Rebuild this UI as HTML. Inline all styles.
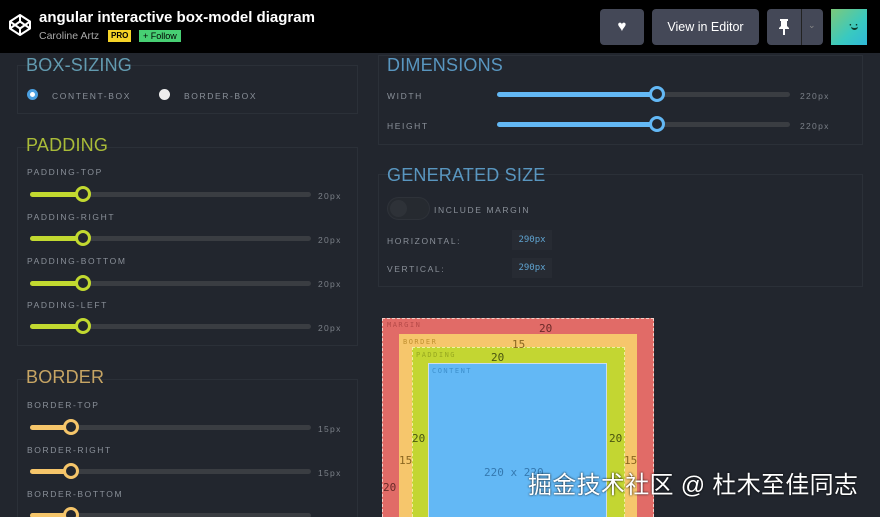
<!DOCTYPE html>
<html style="width:880px;height:517px;overflow:hidden"><head><meta charset="utf-8"><style>
*{margin:0;padding:0;box-sizing:border-box}
body{width:880px;height:517px;overflow:hidden;background:#22262e;font-family:"Liberation Sans",sans-serif}
#w{position:relative;width:880px;height:517px;overflow:hidden}
.a{position:absolute}
.hdr{left:0;top:0;width:880px;height:53px;background:#000}
.panel{position:absolute;border:1px solid #2b3038}
.h{position:absolute;font-size:18px;font-weight:normal;letter-spacing:0.2px;opacity:.9}
.lbl{position:absolute;font-size:8.5px;letter-spacing:1.6px;color:#8a9099}
.trk{position:absolute;height:5px;border-radius:3px;background:#3a3d42}
.fill{position:absolute;left:0;top:0;height:5px;border-radius:3px}
.th{position:absolute;width:16px;height:16px;border-radius:50%;border:3px solid;background:#22262e;top:-6px}
.val{position:absolute;font-size:8.5px;letter-spacing:1.3px;color:#7b8088}
.mono{font-family:"DejaVu Sans Mono","Liberation Mono",monospace}
</style></head><body><div id="w">
<div class="a hdr"></div>
<svg class="a" style="left:8px;top:13px" width="24" height="24" viewBox="0 0 24 24" fill="none" stroke="#fff" stroke-width="2" stroke-linejoin="round"><path d="M12 2L22 8.5V15.5L12 22L2 15.5V8.5Z M12 2V8.5 M12 15.5V22 M2 8.5L12 15.5L22 8.5 M2 15.5L12 8.5L22 15.5"/></svg>
<div class="a" style="left:39px;top:9px;color:#fff;font-weight:bold;font-size:15px">angular interactive box-model diagram</div>
<div class="a" style="left:39px;top:30px;color:#aaa;font-size:10.5px">Caroline Artz</div>
<div class="a" style="left:108px;top:30px;background:#f5d327;color:#000;font-size:8px;font-weight:bold;padding:1px 3px;height:12px">PRO</div>
<div class="a" style="left:139px;top:30px;background:#47cf73;color:#000;font-size:9px;padding:0 4px;height:12px;line-height:12px">+ Follow</div>
<div class="a" style="left:600px;top:9px;width:44px;height:36px;background:#444857;border-radius:4px;color:#fff;text-align:center;line-height:36px;font-size:15px">♥</div>
<div class="a" style="left:652px;top:9px;width:107px;height:36px;background:#444857;border-radius:4px;color:#fff;text-align:center;line-height:36px;font-size:12.5px">View in Editor</div>
<div class="a" style="left:767px;top:9px;width:56px;height:36px;background:#444857;border-radius:4px"></div>
<div class="a" style="left:801px;top:9px;width:1px;height:36px;background:#222"></div>
<svg class="a" style="left:778px;top:19px" width="12" height="16" viewBox="0 0 12 16"><path d="M2 0H10V2H9V7L11 9V10H7V16H5V10H1V9L3 7V2H2Z" fill="#fff"/></svg>
<div class="a" style="left:808px;top:20px;color:#888;font-size:9px">⌄</div>
<div class="a" style="left:831px;top:9px;width:36px;height:36px;background:linear-gradient(135deg,#7cc97a,#39c9c0 60%,#2fb8d8)"></div>
<div class="a" style="left:849px;top:20px;color:#0b3a2a;font-size:10px;font-weight:bold">· ·</div>
<div class="a" style="left:851px;top:26px;width:7px;height:4px;border-bottom:2px solid #0b3a2a;border-radius:0 0 4px 4px"></div>

<div class="panel" style="left:17px;top:65px;width:341px;height:49px"></div>
<div class="h" style="left:26px;top:55px;color:#6aa8bf">BOX-SIZING</div>
<div class="a" style="left:27px;top:89px;width:11px;height:11px;border-radius:50%;background:#fff;border:3px solid #4a9fe0"></div>
<div class="lbl" style="left:52px;top:91px">CONTENT-BOX</div>
<div class="a" style="left:159px;top:89px;width:11px;height:11px;border-radius:50%;background:#eee"></div>
<div class="lbl" style="left:184px;top:91px">BORDER-BOX</div>

<div class="panel" style="left:17px;top:147px;width:341px;height:199px"></div>
<div class="h" style="left:26px;top:135px;color:#b8cc3a">PADDING</div>
<div class="lbl" style="left:27px;top:167px">PADDING-TOP</div>
<div class="trk" style="left:30px;top:192px;width:281px"><div class="fill" style="width:53px;background:#c2d930"></div><div class="th" style="left:45px;border-color:#c2d930"></div></div><div class="val" style="left:318px;top:191px">20px</div>
<div class="lbl" style="left:27px;top:212px">PADDING-RIGHT</div>
<div class="trk" style="left:30px;top:236px;width:281px"><div class="fill" style="width:53px;background:#c2d930"></div><div class="th" style="left:45px;border-color:#c2d930"></div></div><div class="val" style="left:318px;top:235px">20px</div>
<div class="lbl" style="left:27px;top:256px">PADDING-BOTTOM</div>
<div class="trk" style="left:30px;top:281px;width:281px"><div class="fill" style="width:53px;background:#c2d930"></div><div class="th" style="left:45px;border-color:#c2d930"></div></div><div class="val" style="left:318px;top:279px">20px</div>
<div class="lbl" style="left:27px;top:300px">PADDING-LEFT</div>
<div class="trk" style="left:30px;top:324px;width:281px"><div class="fill" style="width:53px;background:#c2d930"></div><div class="th" style="left:45px;border-color:#c2d930"></div></div><div class="val" style="left:318px;top:323px">20px</div>

<div class="a" style="left:17px;top:379px;width:341px;height:138px;border:1px solid #2b3038;border-bottom:none"></div>
<div class="h" style="left:26px;top:367px;color:#d9b36a">BORDER</div>
<div class="lbl" style="left:27px;top:400px">BORDER-TOP</div>
<div class="trk" style="left:30px;top:425px;width:281px"><div class="fill" style="width:42px;background:#f5c56a"></div><div class="th" style="left:33px;border-color:#f5c56a"></div></div><div class="val" style="left:318px;top:424px">15px</div>
<div class="lbl" style="left:27px;top:445px">BORDER-RIGHT</div>
<div class="trk" style="left:30px;top:469px;width:281px"><div class="fill" style="width:42px;background:#f5c56a"></div><div class="th" style="left:33px;border-color:#f5c56a"></div></div><div class="val" style="left:318px;top:468px">15px</div>
<div class="lbl" style="left:27px;top:489px">BORDER-BOTTOM</div>
<div class="a" style="left:20px;top:503px;width:320px;height:14px;overflow:hidden">
<div class="trk" style="left:10px;top:10px;width:281px"><div class="fill" style="width:42px;background:#f5c56a"></div><div class="th" style="left:33px;border-color:#f5c56a"></div></div>
</div>

<div class="panel" style="left:378px;top:55px;width:485px;height:90px"></div>
<div class="h" style="left:387px;top:55px;color:#5fa3d0">DIMENSIONS</div>
<div class="lbl" style="left:387px;top:91px">WIDTH</div>
<div class="trk" style="left:497px;top:92px;width:293px"><div class="fill" style="width:160px;background:#63b8f5"></div><div class="th" style="left:152px;border-color:#63b8f5"></div></div><div class="val" style="left:800px;top:91px">220px</div>
<div class="lbl" style="left:387px;top:121px">HEIGHT</div>
<div class="trk" style="left:497px;top:122px;width:293px"><div class="fill" style="width:160px;background:#63b8f5"></div><div class="th" style="left:152px;border-color:#63b8f5"></div></div><div class="val" style="left:800px;top:121px">220px</div>

<div class="panel" style="left:378px;top:174px;width:485px;height:113px"></div>
<div class="h" style="left:387px;top:165px;color:#5fa3d0">GENERATED SIZE</div>
<div class="a" style="left:387px;top:197px;width:43px;height:23px;border-radius:12px;background:#262a30;border:1px solid #2e3239"></div>
<div class="a" style="left:390px;top:200px;width:17px;height:17px;border-radius:50%;background:#2e3238"></div>
<div class="lbl" style="left:434px;top:205px">INCLUDE MARGIN</div>
<div class="lbl" style="left:387px;top:236px">HORIZONTAL:</div>
<div class="a mono" style="left:512px;top:230px;width:40px;height:20px;background:#272b33;color:#5fa3d0;font-size:9px;line-height:20px;text-align:center">290px</div>
<div class="lbl" style="left:387px;top:264px">VERTICAL:</div>
<div class="a mono" style="left:512px;top:258px;width:40px;height:20px;background:#272b33;color:#5fa3d0;font-size:9px;line-height:20px;text-align:center">290px</div>

<div class="a" style="left:382px;top:318px;width:272px;height:199px;overflow:hidden">
<div class="a" style="left:0;top:0;width:272px;height:199px;background:#e16b67;border:1px dashed #f3d0c8;border-bottom:none"></div>
<div class="a" style="left:17px;top:16px;width:238px;height:183px;background:#f6c66c"></div>
<div class="a" style="left:30px;top:29px;width:213px;height:170px;background:#c3d632;border:1px dashed #eef0a0;border-bottom:none"></div>
<div class="a" style="left:46px;top:45px;width:179px;height:154px;background:#63b8f5;border:1px solid #cde;border-bottom:none"></div>
</div>
<div class="a mono" style="left:387px;top:321px;font-size:7px;letter-spacing:1.5px;color:#b54a48">MARGIN</div>
<div class="a mono" style="left:403px;top:338px;font-size:7px;letter-spacing:1.5px;color:#c09030">BORDER</div>
<div class="a mono" style="left:416px;top:351px;font-size:7px;letter-spacing:1.5px;color:#97a820">PADDING</div>
<div class="a mono" style="left:432px;top:367px;font-size:7px;letter-spacing:1.5px;color:#3d8fcc">CONTENT</div>
<div class="a mono" style="left:539px;top:322px;font-size:11px;color:#6a2a28">20</div>
<div class="a mono" style="left:512px;top:338px;font-size:11px;color:#8a6620">15</div>
<div class="a mono" style="left:491px;top:351px;font-size:11px;color:#4a5510">20</div>
<div class="a mono" style="left:412px;top:432px;font-size:11px;color:#4a5510">20</div>
<div class="a mono" style="left:609px;top:432px;font-size:11px;color:#4a5510">20</div>
<div class="a mono" style="left:399px;top:454px;font-size:11px;color:#8a6620">15</div>
<div class="a mono" style="left:624px;top:454px;font-size:11px;color:#8a6620">15</div>
<div class="a mono" style="left:383px;top:481px;font-size:11px;color:#6a2a28">20</div>
<div class="a mono" style="left:484px;top:466px;font-size:11px;color:#3579b0">220 x 220</div>

<div class="a" style="left:528px;top:470px;font-family:'Liberation Sans','Noto Sans CJK SC',sans-serif;font-size:24px;line-height:32px;letter-spacing:0.3px;color:#fff;text-shadow:0 0 2px #000;white-space:nowrap">掘金技术社区 @ 杜木至佳同志</div>
</div></body></html>
